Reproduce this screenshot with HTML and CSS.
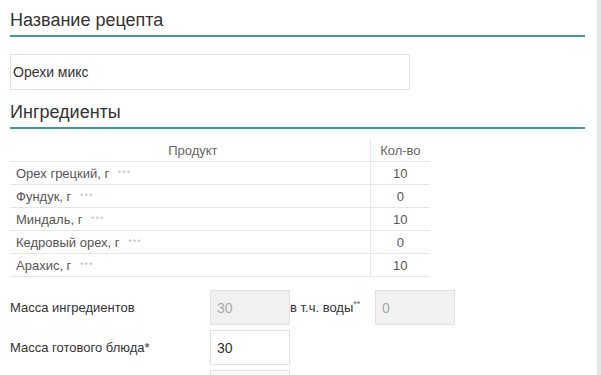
FILE: index.html
```html
<!DOCTYPE html>
<html lang="ru">
<head>
  <meta charset="UTF-8" />
  <title>Рецепт</title>
  <link rel="stylesheet" href="styles.css">
</head>
<body>
  <div class="page">
    <h2 class="title">Название рецепта</h2>
    <input class="name-input" type="text" value="Орехи микс" />

    <h2 class="title">Ингредиенты</h2>
    <table class="ingr">
      <thead>
        <tr><th class="prod">Продукт</th><th class="qty">Кол-во</th></tr>
      </thead>
      <tbody>
        <tr><td class="prod">Орех грецкий, г <span class="dots">***</span></td><td class="qty">10</td></tr>
        <tr><td class="prod">Фундук, г <span class="dots">***</span></td><td class="qty">0</td></tr>
        <tr><td class="prod">Миндаль, г <span class="dots">***</span></td><td class="qty">10</td></tr>
        <tr><td class="prod">Кедровый орех, г <span class="dots">***</span></td><td class="qty">0</td></tr>
        <tr><td class="prod">Арахис, г <span class="dots">***</span></td><td class="qty">10</td></tr>
      </tbody>
    </table>

    <div class="row">
      <label class="lbl">Масса ингредиентов</label>
      <input class="num" type="text" value="30" disabled />
      <label class="sub">в т.ч. воды<sup>**</sup></label>
      <input class="num" type="text" value="0" disabled />
    </div>
    <div class="row">
      <label class="lbl">Масса готового блюда*</label>
      <input class="num" type="text" value="30" />
    </div>
    <div class="row">
      <label class="lbl"></label>
      <input class="num" type="text" value="" />
    </div>
  </div>
  <div class="scroll"></div>
</body>
</html>
```
FILE: styles.css
```css
body {
  margin: 0;
  font-family: "Liberation Sans", Arial, sans-serif;
  color: #333;
  background: #fff;
  overflow: hidden;
}

.page {
  width: 575px;
  padding: 8px 0 0 10px;
}

.title {
  margin: 0;
  padding-top: 2px;
  padding-bottom: 4px;
  font-size: 18px;
  font-weight: normal;
  color: #333;
  border-bottom: 2px solid #3f9a97;
}

.name-input {
  display: block;
  box-sizing: border-box;
  width: 400px;
  height: 36px;
  margin: 17px 0 10px;
  padding: 0 2px;
  border: 1px solid #e2e2e2;
  font-family: inherit;
  font-size: 14px;
  color: #333;
}

.ingr {
  border-collapse: collapse;
  width: 420px;
  margin-top: 10px;
  font-size: 13px;
  color: #555;
}

.ingr th, .ingr td {
  height: 22px;
  padding: 0;
  border-bottom: 1px solid #e6e6e6;
}

.ingr th {
  font-weight: normal;
  color: #666;
}

.ingr .prod {
  width: 360px;
  padding-left: 6px;
  text-align: left;
}

.ingr th.prod {
  text-align: center;
}

.ingr .qty {
  width: 60px;
  text-align: center;
  border-left: 1px solid #e6e6e6;
}

.dots {
  margin-left: 5px;
  font-size: 9px;
  letter-spacing: 1px;
  color: #b8bfc6;
  vertical-align: 2px;
}

.row {
  display: flex;
  align-items: center;
  margin-top: 5px;
}

.ingr + .row {
  margin-top: 13px;
}

.lbl {
  width: 200px;
  font-size: 13px;
  color: #333;
}

.sub {
  width: 85px;
  font-size: 13px;
  color: #333;
}

.sub sup {
  font-size: 9px;
  color: #555;
}

.num {
  box-sizing: border-box;
  width: 80px;
  height: 35px;
  padding: 0 6px;
  border: 1px solid #e2e2e2;
  font-family: inherit;
  font-size: 14px;
  color: #333;
  background: #fff;
}

.num:disabled {
  background: #f1f1f1;
  color: #aaa;
}

.scroll {
  position: fixed;
  top: 0;
  right: 0;
  width: 4px;
  height: 100%;
  background: #e6e6e6;
}
```
